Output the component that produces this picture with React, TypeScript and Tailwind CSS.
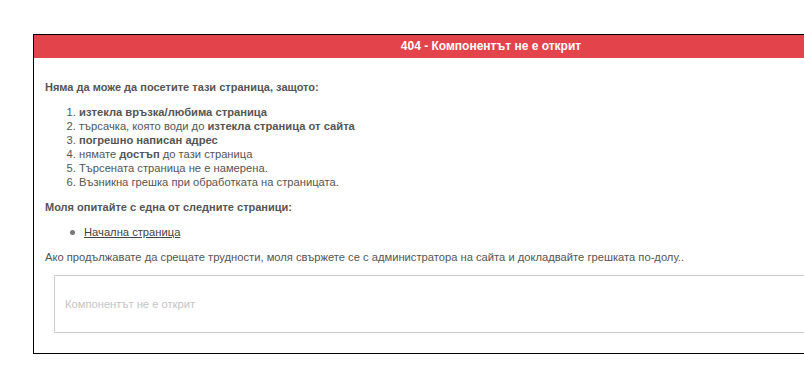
import React from 'react';

const reasons: React.ReactNode[] = [
  <b key="1">изтекла връзка/любима страница</b>,
  <>търсачка, която води до <b>изтекла страница от сайта</b></>,
  <b key="3">погрешно написан адрес</b>,
  <>нямате <b>достъп</b> до тази страница</>,
  <>Търсената страница не е намерена.</>,
  <>Възникна грешка при обработката на страницата.</>,
];

export default function App() {
  return (
    <div className="w-full h-[368px] overflow-hidden bg-white" style={{ fontFamily: '"Liberation Sans", Arial, sans-serif' }}>
      <div className="ml-[33px] mt-[34px] w-[916px] border border-black">
        <div className="h-[23px] bg-[#e3444b] text-white text-[12px] font-bold leading-[23px] text-center">
          404 - Компонентът не е открит
        </div>
        <div className="px-[11px] pt-[22px] pb-[20px] text-[11.2px] leading-[14px] text-[#555]">
          <p className="font-bold text-[11px]">Няма да може да посетите тази страница, защото:</p>
          <ol className="list-decimal pl-[34px] mt-[11px]">
            {reasons.map((r, i) => (
              <li key={i}>{r}</li>
            ))}
          </ol>
          <p className="font-bold text-[11px] mt-[11px]">Моля опитайте с една от следните страници:</p>
          <ul className="mt-[11px] pl-[25px]">
            <li className="flex items-center">
              <span className="w-[5px] h-[5px] rounded-full bg-[#777] mr-[9px]" />
              <a href="#" className="underline text-[#444]">Начална страница</a>
            </li>
          </ul>
          <p className="mt-[11px]">Ако продължавате да срещате трудности, моля свържете се с администратора на сайта и докладвайте грешката по-долу..</p>
          <div className="mt-[11px] mx-[9px] h-[58px] border border-[#ccc] flex items-center px-[10px] text-[#c4c4c4]">
            Компонентът не е открит
          </div>
        </div>
      </div>
    </div>
  );
}
